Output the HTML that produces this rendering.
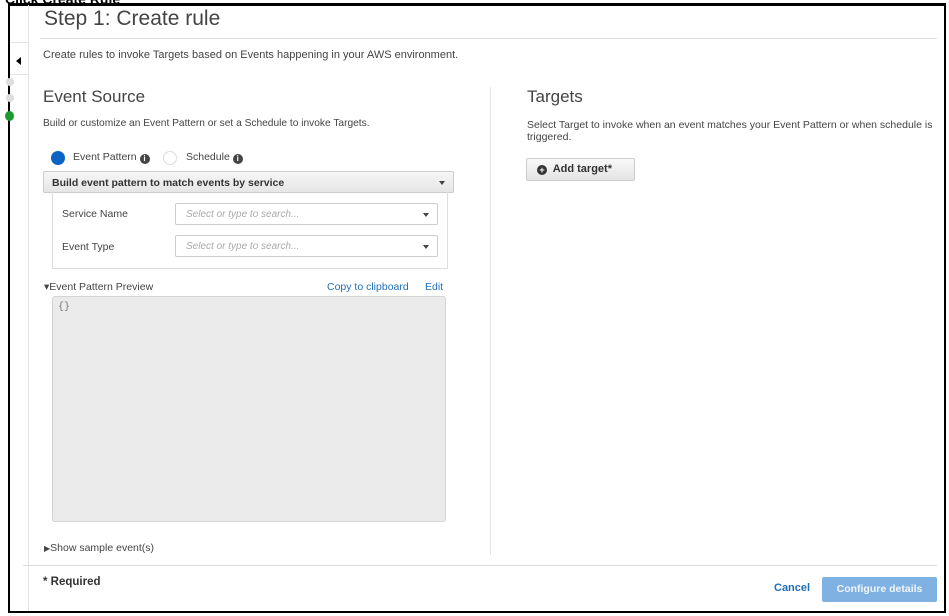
<!DOCTYPE html>
<html><head><style>
*{box-sizing:border-box;margin:0;padding:0}
body{width:949px;height:616px;background:#fff;font-family:"Liberation Sans",sans-serif;position:relative;overflow:hidden;color:#444}
.a{position:absolute}
.s{font-size:11px;color:#444}
.sel{position:absolute;left:175px;width:263px;height:22px;border:1px solid #ccc;border-radius:2px;background:#fff;font-size:10px;color:#aaa;font-style:italic;padding:5px 10px}
.caret{position:absolute;right:8px;top:9px;border-left:3px solid transparent;border-right:3px solid transparent;border-top:4px solid #444}
.info{display:inline-block;width:10px;height:10px;border-radius:50%;background:#444;color:#fff;font-size:8px;text-align:center;line-height:10px;font-weight:bold;vertical-align:-1px}
</style></head><body>
<div class="a" style="left:5px;top:-9px;font-weight:bold;font-size:14px;color:#000">Click Create Rule</div>
<div class="a" style="left:8px;top:3px;width:938px;height:610px;border:2px solid #000;border-top-width:3px"></div>
<div class="a" style="left:28px;top:5px;width:1px;height:606px;background:#e4e4e4"></div>
<div class="a" style="left:10px;top:42px;width:19px;height:33px;background:#fff;border:1px solid #e4e4e4;border-left:none"></div>
<div class="a" style="left:16px;top:57px;border-top:4px solid transparent;border-bottom:4px solid transparent;border-right:5px solid #000"></div>
<div class="a" style="left:6px;top:78px;width:8px;height:8px;border-radius:50%;background:#ddd"></div>
<div class="a" style="left:6px;top:94px;width:8px;height:8px;border-radius:50%;background:#ddd"></div>
<div class="a" style="left:5px;top:111px;width:9px;height:10px;border-radius:50%;background:#1a9b2e"></div>

<div class="a" style="left:44px;top:7px;font-size:21px;color:#444">Step 1: Create rule</div>
<div class="a" style="left:40px;top:38px;width:897px;height:1px;background:#ddd"></div>
<div class="a s" style="left:43px;top:49px;font-size:11px">Create rules to invoke Targets based on Events happening in your AWS environment.</div>

<div class="a" style="left:43px;top:87px;font-size:17px">Event Source</div>
<div class="a s" style="left:43px;top:118px;font-size:10.2px">Build or customize an Event Pattern or set a Schedule to invoke Targets.</div>
<div class="a" style="left:51px;top:151px;width:14px;height:14px;border-radius:50%;background:#0b63c4"></div>
<div class="a s" style="left:73px;top:151px;font-size:10.5px">Event Pattern <span class="info">i</span></div>
<div class="a" style="left:163px;top:151px;width:14px;height:14px;border-radius:50%;border:1px solid #ddd"></div>
<div class="a s" style="left:186px;top:151px;font-size:10.5px">Schedule <span class="info">i</span></div>

<div class="a" style="left:43px;top:171px;width:411px;height:22px;border:1px solid #ccc;border-radius:2px;background:linear-gradient(#f6f6f6,#e6e6e6);font-size:10.5px;font-weight:bold;color:#333;padding:5px 8px">Build event pattern to match events by service<span class="caret"></span></div>
<div class="a" style="left:52px;top:192px;width:396px;height:77px;border:1px solid #ddd;border-top:none"></div>
<div class="a s" style="left:62px;top:208px;font-size:10.5px">Service Name</div>
<div class="sel" style="top:203px">Select or type to search...<span class="caret"></span></div>
<div class="a s" style="left:62px;top:241px;font-size:10.5px">Event Type</div>
<div class="sel" style="top:235px">Select or type to search...<span class="caret"></span></div>

<div class="a s" style="left:44px;top:281px;font-size:10.5px">▾Event Pattern Preview</div>
<div class="a" style="left:327px;top:281px;font-size:10.5px;color:#1f6fb8">Copy to clipboard</div>
<div class="a" style="left:425px;top:281px;font-size:10.5px;color:#1f6fb8">Edit</div>
<div class="a" style="left:52px;top:296px;width:394px;height:226px;border:1px solid #d4d4d4;border-radius:3px;background:#ebebeb;font-family:'Liberation Mono',monospace;font-size:10px;color:#777;padding:5px 5px">{}</div>
<div class="a s" style="left:44px;top:542px;font-size:10.5px"><span style="font-size:8px">▶</span>Show sample event(s)</div>

<div class="a" style="left:490px;top:87px;width:1px;height:468px;background:#e4e4e4"></div>
<div class="a" style="left:527px;top:87px;font-size:17px">Targets</div>
<div class="a s" style="left:527px;top:119px;font-size:10.5px;line-height:12px;width:415px">Select Target to invoke when an event matches your Event Pattern or when schedule is triggered.</div>
<div class="a" style="left:526px;top:158px;width:109px;height:23px;border:1px solid #ccc;border-radius:2px;background:linear-gradient(#f8f8f8,#e4e4e4);font-size:11px;font-weight:bold;color:#333;padding:4px 0 0 10px"><span style="display:inline-block;width:10px;height:10px;border-radius:50%;background:#333;color:#fff;font-size:9px;line-height:10px;text-align:center;vertical-align:-1px">+</span>&nbsp; Add target*</div>

<div class="a" style="left:23px;top:565px;width:914px;height:1px;background:#ddd"></div>
<div class="a" style="left:43px;top:576px;font-size:11.5px;font-weight:bold;color:#333">* Required</div>
<div class="a" style="left:774px;top:582px;font-size:11px;font-weight:bold;color:#1f6fb8">Cancel</div>
<div class="a" style="left:822px;top:577px;width:115px;height:25px;background:#7fb2e2;border-radius:2px;color:#f0f6fc;font-size:10.5px;font-weight:bold;text-align:center;line-height:25px">Configure details</div>
</body></html>
